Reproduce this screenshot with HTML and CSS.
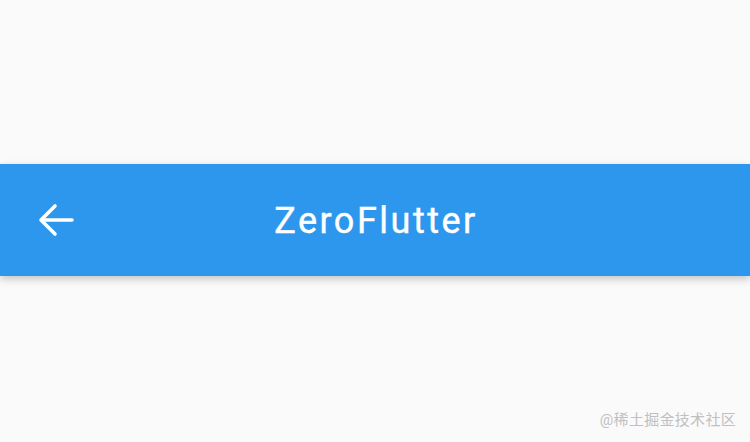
FILE: index.html
```html
<!DOCTYPE html>
<html lang="zh">
  <head>
    <meta charset="UTF-8" />
    <meta name="viewport" content="width=device-width, initial-scale=1.0" />
    <title>ZeroFlutter</title>
    <link rel="stylesheet" href="styles.css">
  </head>
  <body>
    <div class="screen">
      <header class="app-bar">
        <button class="back" aria-label="Back">
          <svg viewBox="0 0 48 48" width="48" height="48">
            <path d="M40 24H10M23 10L9 24l14 14" fill="none" stroke="#fff" stroke-width="3.6" stroke-linecap="round" stroke-linejoin="round" />
          </svg>
        </button>
        <h1 class="title">ZeroFlutter</h1>
      </header>
      <p class="watermark">@稀土掘金技术社区</p>
    </div>
  </body>
</html>
```

FILE: styles.css
```css
/* Base */
html,
body {
  margin: 0;
  background: #fafafa;
}
body {
  font-family: Roboto, "Noto Sans CJK SC", sans-serif;
}
.screen {
  position: relative;
  height: 442px;
  padding-top: 164px;
  box-sizing: border-box;
}

/* App bar */
.app-bar {
  position: relative;
  height: 112px;
  background: #2d97ed;
  display: flex;
  align-items: center;
  justify-content: center;
  box-shadow: 0 3px 8px rgba(0, 0, 0, 0.22);
}
.back {
  position: absolute;
  left: 32px;
  top: 32px;
  width: 48px;
  height: 48px;
  padding: 0;
  border: none;
  background: none;
}
.back svg {
  display: block;
}
.title {
  margin: 0;
  color: #fff;
  font-size: 36px;
  font-weight: 400;
  letter-spacing: 2.5px;
  line-height: 1;
  padding: 1px 0 0 2px;
  -webkit-text-stroke: 0.4px #fff;
}

/* Watermark */
.watermark {
  position: absolute;
  right: 14px;
  bottom: 13px;
  margin: 0;
  font-size: 15px;
  color: #c0c0c0;
  letter-spacing: 0.3px;
}
```
